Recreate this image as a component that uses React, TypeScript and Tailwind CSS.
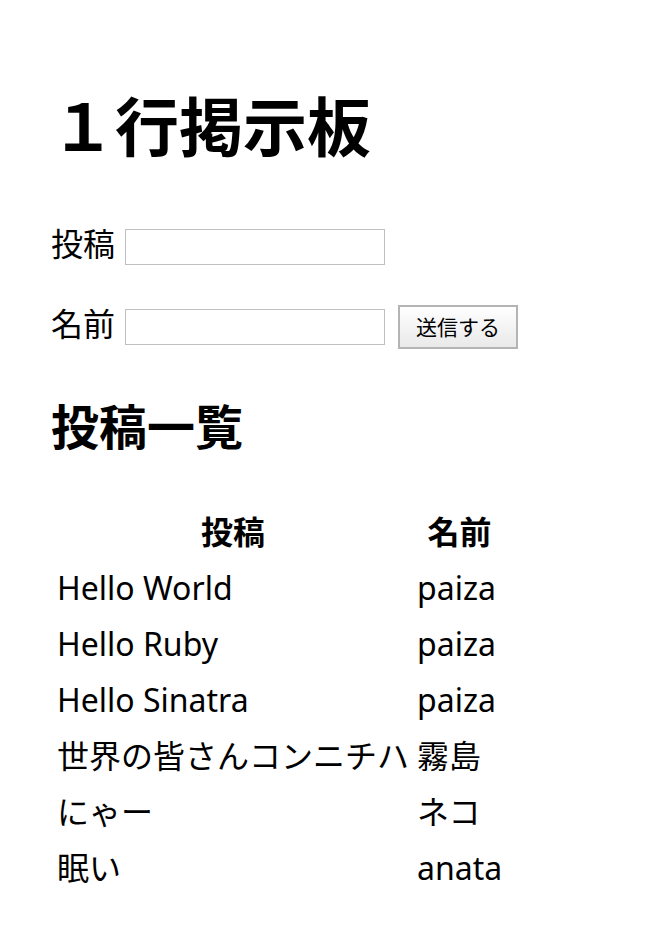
const posts = [
  { body: "Hello World", name: "paiza" },
  { body: "Hello Ruby", name: "paiza" },
  { body: "Hello Sinatra", name: "paiza" },
  { body: "世界の皆さんコンニチハ", name: "霧島" },
  { body: "にゃー", name: "ネコ" },
  { body: "眠い", name: "anata" },
];

export default function App() {
  return (
    <div
      className="min-h-screen bg-white text-black pl-[51px] text-[32px]"
      style={{ fontFamily: '"Noto Sans", "Noto Sans CJK JP", sans-serif' }}
    >
      {/* タイトル */}
      <h1 className="pt-[79px] text-[64px] leading-[96px] font-bold">１行掲示板</h1>

      {/* 投稿フォーム */}
      <form className="mt-[50px]" onSubmit={(e) => e.preventDefault()}>
        <div className="flex items-center h-[44px]">
          <label className="leading-[48px] pb-[6px] mr-[10px]">投稿</label>
          <input
            type="text"
            className="w-[260px] h-[36px] border border-[#c0c0c0] bg-white outline-none px-1 text-[20px]"
          />
        </div>
        <div className="flex items-center h-[44px] mt-[36px]">
          <label className="leading-[48px] pb-[6px] mr-[10px]">名前</label>
          <input
            type="text"
            className="w-[260px] h-[36px] border border-[#c0c0c0] bg-white outline-none px-1 text-[20px]"
          />
          <button
            type="submit"
            className="ml-[13px] w-[120px] h-[44px] border-2 border-[#b4b4b4] bg-gradient-to-b from-white to-[#e9e9e9] text-[21px] leading-none"
          >
            送信する
          </button>
        </div>
      </form>

      {/* 一覧 */}
      <h2 className="mt-[42px] text-[48px] leading-[72px] font-bold">投稿一覧</h2>

      <table className="mt-[39px] border-separate border-spacing-[4px]">
        <thead>
          <tr>
            <th className="p-[2px] leading-[48px] font-bold text-center">投稿</th>
            <th className="p-[2px] leading-[48px] font-bold text-center">名前</th>
          </tr>
        </thead>
        <tbody>
          {posts.map((post, index) => (
            <tr key={index}>
              <td className="p-[2px] leading-[48px] whitespace-nowrap">{post.body}</td>
              <td className="p-[2px] leading-[48px] whitespace-nowrap">{post.name}</td>
            </tr>
          ))}
        </tbody>
      </table>
    </div>
  );
}
